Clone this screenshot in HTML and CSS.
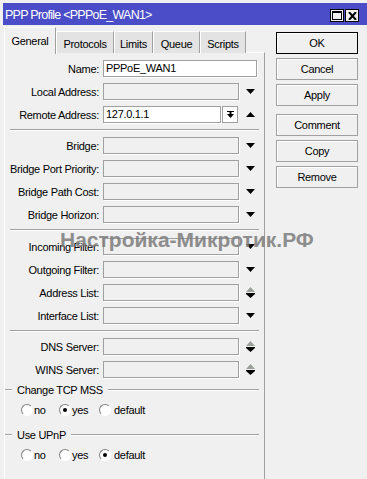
FILE: index.html
```html
<!DOCTYPE html>
<html lang="en">
<head>
  <meta charset="UTF-8">
  <title>PPP Profile &lt;PPPoE_WAN1&gt;</title>
  <link rel="stylesheet" href="styles.css">
</head>
<body>
  <div class="window">
    <div class="titlebar">
      <span class="title">PPP Profile &lt;PPPoE_WAN1&gt;</span>
      <div class="title-buttons">
        <span class="tbtn"><svg width="10" height="9" viewBox="0 0 10 9"><rect x="0.5" y="0.5" width="9" height="8" fill="none" stroke="#000"/><rect x="0" y="0" width="10" height="2" fill="#000"/></svg></span>
        <span class="tbtn"><svg width="9" height="8" viewBox="0 0 9 8"><path d="M1 0 L8 8 M8 0 L1 8" stroke="#000" stroke-width="2"/></svg></span>
      </div>
    </div>

    <div class="content">
      <div class="main">
        <div class="tabs">
          <span class="tab active">General</span>
          <span class="tab w-protocols">Protocols</span>
          <span class="tab w-limits">Limits</span>
          <span class="tab w-queue">Queue</span>
          <span class="tab w-scripts">Scripts</span>
        </div>

        <div class="panel">
          <div class="row">
            <span class="label">Name:</span>
            <span class="field white wide">PPPoE_WAN1</span>
          </div>
          <div class="row">
            <span class="label">Local Address:</span>
            <span class="field"></span>
            <span class="arrow"><svg width="9" height="5" viewBox="0 0 9 5"><polygon points="0,0 9,0 4.5,5" fill="#000"/></svg></span>
          </div>
          <div class="row">
            <span class="label">Remote Address:</span>
            <span class="field-combo">
              <span class="field white">127.0.1.1</span>
              <span class="field-btn"><svg width="7" height="7" viewBox="0 0 7 7"><rect x="0" y="0" width="7" height="1" fill="#000"/><rect x="2.5" y="1" width="2" height="2" fill="#000"/><polygon points="0,3 7,3 3.5,7" fill="#000"/></svg></span>
            </span>
            <span class="arrow"><svg width="9" height="5" viewBox="0 0 9 5"><polygon points="0,5 9,5 4.5,0" fill="#000"/></svg></span>
          </div>

          <div class="separator"></div>

          <div class="row">
            <span class="label">Bridge:</span>
            <span class="field"></span>
            <span class="arrow"><svg width="9" height="5" viewBox="0 0 9 5"><polygon points="0,0 9,0 4.5,5" fill="#000"/></svg></span>
          </div>
          <div class="row">
            <span class="label">Bridge Port Priority:</span>
            <span class="field"></span>
            <span class="arrow"><svg width="9" height="5" viewBox="0 0 9 5"><polygon points="0,0 9,0 4.5,5" fill="#000"/></svg></span>
          </div>
          <div class="row">
            <span class="label">Bridge Path Cost:</span>
            <span class="field"></span>
            <span class="arrow"><svg width="9" height="5" viewBox="0 0 9 5"><polygon points="0,0 9,0 4.5,5" fill="#000"/></svg></span>
          </div>
          <div class="row">
            <span class="label">Bridge Horizon:</span>
            <span class="field"></span>
            <span class="arrow"><svg width="9" height="5" viewBox="0 0 9 5"><polygon points="0,0 9,0 4.5,5" fill="#000"/></svg></span>
          </div>

          <div class="separator roomy"></div>

          <div class="row">
            <span class="label">Incoming Filter:</span>
            <span class="field"></span>
            <span class="arrow"><svg width="9" height="5" viewBox="0 0 9 5"><polygon points="0,0 9,0 4.5,5" fill="#000"/></svg></span>
          </div>
          <div class="row">
            <span class="label">Outgoing Filter:</span>
            <span class="field"></span>
            <span class="arrow"><svg width="9" height="5" viewBox="0 0 9 5"><polygon points="0,0 9,0 4.5,5" fill="#000"/></svg></span>
          </div>
          <div class="row">
            <span class="label">Address List:</span>
            <span class="field"></span>
            <span class="arrow"><svg width="9" height="11" viewBox="0 0 9 11"><polygon points="0,5 9,5 4.5,0" fill="#9ba09b"/><rect x="0" y="6" width="9" height="1" fill="#000"/><polygon points="0,7 9,7 4.5,11" fill="#000"/></svg></span>
          </div>
          <div class="row">
            <span class="label">Interface List:</span>
            <span class="field"></span>
            <span class="arrow"><svg width="9" height="5" viewBox="0 0 9 5"><polygon points="0,0 9,0 4.5,5" fill="#000"/></svg></span>
          </div>

          <div class="separator"></div>

          <div class="row">
            <span class="label">DNS Server:</span>
            <span class="field"></span>
            <span class="arrow"><svg width="9" height="11" viewBox="0 0 9 11"><polygon points="0,5 9,5 4.5,0" fill="#9ba09b"/><rect x="0" y="6" width="9" height="1" fill="#000"/><polygon points="0,7 9,7 4.5,11" fill="#000"/></svg></span>
          </div>
          <div class="row">
            <span class="label">WINS Server:</span>
            <span class="field"></span>
            <span class="arrow"><svg width="9" height="11" viewBox="0 0 9 11"><polygon points="0,5 9,5 4.5,0" fill="#9ba09b"/><rect x="0" y="6" width="9" height="1" fill="#000"/><polygon points="0,7 9,7 4.5,11" fill="#000"/></svg></span>
          </div>

          <div class="group-title"><span class="line-start"></span><span>Change TCP MSS</span><span class="line-rest"></span></div>
          <div class="radios">
            <span class="radio"><span class="dot"></span>no</span>
            <span class="radio r-yes"><span class="dot checked"></span>yes</span>
            <span class="radio r-last"><span class="dot"></span>default</span>
          </div>

          <div class="group-title"><span class="line-start"></span><span>Use UPnP</span><span class="line-rest"></span></div>
          <div class="radios">
            <span class="radio"><span class="dot"></span>no</span>
            <span class="radio r-yes"><span class="dot"></span>yes</span>
            <span class="radio r-last"><span class="dot checked"></span>default</span>
          </div>
        </div>
      </div>

      <div class="buttons">
        <span class="btn default">OK</span>
        <span class="btn">Cancel</span>
        <span class="btn">Apply</span>
        <span class="btn spaced">Comment</span>
        <span class="btn">Copy</span>
        <span class="btn">Remove</span>
      </div>
    </div>

    <div class="watermark">Настройка-Микротик.РФ</div>
  </div>
</body>
</html>
```

FILE: styles.css
```css
:root {
  --bg: #f0f0f0;
  --tab-bg: #e3e3e3;
  --edge: #a0a0a0;
  --title-bg: #4a4dc7;
}

* {
  box-sizing: border-box;
}

body {
  margin: 0;
  background: var(--bg);
  font-family: "Liberation Sans", Arial, sans-serif;
  font-size: 11px;
  letter-spacing: -0.3px;
  color: #000;
  overflow: hidden;
}

.window {
  position: relative;
  height: 479px;
  padding: 3px 0 0 3px;
}

.titlebar {
  height: 22px;
  background: var(--title-bg);
  color: #fff;
  display: flex;
  align-items: center;
  justify-content: space-between;
  padding: 0 8px 0 2px;
}

.title {
  font-size: 12.5px;
  letter-spacing: -0.75px;
  margin-top: 1px;
}

.title-buttons {
  display: flex;
  gap: 1px;
  margin-top: 3px;
}

.tbtn {
  width: 14px;
  height: 13px;
  background: var(--bg);
  border: 1px solid #000;
  display: flex;
  align-items: center;
  justify-content: center;
}

.content {
  display: flex;
}

.main {
  width: 261px;
  margin-left: 1px;
}

/* tabs */
.tabs {
  display: flex;
  align-items: flex-end;
  height: 26px;
  margin-top: 2px;
  position: relative;
  z-index: 1;
}

.tab {
  height: 22px;
  background: var(--tab-bg);
  border-left: 1px solid #fff;
  border-top: 1px solid #fff;
  border-right: 1px solid var(--edge);
  display: flex;
  align-items: center;
  justify-content: center;
  padding-top: 2px;
}

.tab.active {
  width: 52px;
  height: 27px;
  background: var(--bg);
  padding-top: 0;
  margin-bottom: -1px;
}

.w-protocols { width: 58px; }
.w-limits { width: 39px; }
.w-queue { width: 47px; }
.w-scripts { width: 46px; }

.panel {
  height: 430px;
  margin-top: -1px;
  border-top: 1px solid #fff;
  border-left: 1px solid #fff;
  border-right: 1px solid var(--edge);
  padding-top: 7px;
}

/* form rows */
.row {
  display: grid;
  grid-template-columns: 94px 136px 19px;
  column-gap: 4px;
  height: 17px;
  margin-bottom: 6px;
  align-items: center;
}

.label {
  text-align: right;
  white-space: nowrap;
}

.field {
  height: 17px;
  border: 1px solid var(--edge);
  box-shadow: 1px 1px 0 #fff;
  background: var(--bg);
  padding-left: 2px;
  line-height: 15px;
}

.field.white {
  background: #fff;
}

.field.wide {
  grid-column: 2 / 4;
  width: 154px;
}

.field-combo {
  display: flex;
  gap: 1px;
}

.field-combo .field {
  width: 118px;
}

.field-btn {
  width: 16px;
  height: 17px;
  background: #fff;
  border: 1px solid var(--edge);
  display: flex;
  align-items: center;
  justify-content: center;
}

.arrow {
  display: flex;
  justify-content: center;
  align-items: center;
  margin-left: -4px;
}

.separator {
  height: 2px;
  margin: 2px 5px 6px 5px;
  border-top: 1px solid var(--edge);
  border-bottom: 1px solid #fff;
}

.separator.roomy {
  margin-top: 3px;
  margin-bottom: 7px;
}

/* option groups */
.group-title {
  display: flex;
  align-items: center;
  height: 12px;
  gap: 5px;
  margin-top: 6px;
  margin-right: 5px;
}

.line-start,
.line-rest {
  height: 2px;
  border-top: 1px solid var(--edge);
  border-bottom: 1px solid #fff;
}

.line-start {
  width: 7px;
}

.line-rest {
  flex: 1;
}

.radios {
  display: flex;
  align-items: center;
  height: 14px;
  margin-top: 7px;
  padding-left: 16px;
}

.radios + .group-title {
  margin-top: 12px;
}

.radio {
  display: flex;
  align-items: center;
  gap: 1px;
  width: 38px;
  white-space: nowrap;
}

.radio.r-yes {
  width: 40px;
}

.radio.r-last {
  width: auto;
  gap: 3px;
}

.dot {
  flex-shrink: 0;
  width: 12px;
  height: 12px;
  border-radius: 50%;
  border: 1px solid;
  border-color: #808080 #fff #fff #808080;
  background: #fff;
  display: flex;
  align-items: center;
  justify-content: center;
}

.dot.checked::after {
  content: "";
  width: 4px;
  height: 4px;
  border-radius: 50%;
  background: #000;
}

/* buttons */
.buttons {
  margin-left: 11px;
  margin-top: 7px;
  width: 82px;
  display: flex;
  flex-direction: column;
  gap: 4px;
}

.btn {
  height: 22px;
  border: 1px solid var(--edge);
  box-shadow: inset 1px 1px 0 #fff;
  background: var(--bg);
  display: flex;
  align-items: center;
  justify-content: center;
}

.btn.default {
  border-color: #000;
}

.btn.spaced {
  margin-top: 4px;
}

.watermark {
  position: absolute;
  left: 60px;
  top: 228px;
  font-size: 21px;
  font-weight: bold;
  letter-spacing: 0;
  color: #7c7c7c;
  opacity: 0.85;
  white-space: nowrap;
}
```
